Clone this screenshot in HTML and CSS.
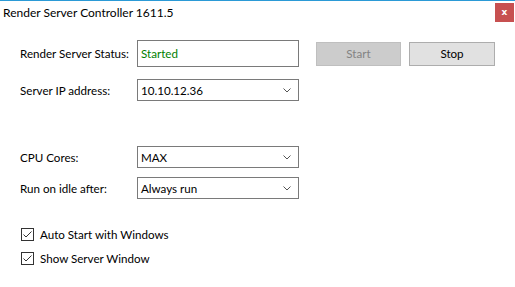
FILE: index.html
```html
<!DOCTYPE html>
<html lang="en">
<head>
    <meta charset="UTF-8">
    <title>Render Server Controller</title>
    <link rel="stylesheet" href="styles.css">
</head>
<body>
    <div class="window">
        <div class="titlebar">
            <span class="title">Render Server Controller 1611.5</span>
            <div class="close-btn">x</div>
        </div>

        <div class="content">
            <div class="row row-status">
                <label class="field-label">Render Server Status:</label>
                <div class="status-box">Started</div>
                <button class="btn btn-disabled" disabled>Start</button>
                <button class="btn">Stop</button>
            </div>

            <div class="row row-ip">
                <label class="field-label">Server IP address:</label>
                <div class="combo">
                    <span>10.10.12.36</span>
                    <svg class="chevron" width="8" height="5" viewBox="0 0 8 5"><polyline points="0.5,0.5 4,4 7.5,0.5" fill="none" stroke="#555" stroke-width="1"/></svg>
                </div>
            </div>

            <div class="row row-cpu">
                <label class="field-label">CPU Cores:</label>
                <div class="combo">
                    <span>MAX</span>
                    <svg class="chevron" width="8" height="5" viewBox="0 0 8 5"><polyline points="0.5,0.5 4,4 7.5,0.5" fill="none" stroke="#555" stroke-width="1"/></svg>
                </div>
            </div>

            <div class="row row-idle">
                <label class="field-label">Run on idle after:</label>
                <div class="combo">
                    <span>Always run</span>
                    <svg class="chevron" width="8" height="5" viewBox="0 0 8 5"><polyline points="0.5,0.5 4,4 7.5,0.5" fill="none" stroke="#555" stroke-width="1"/></svg>
                </div>
            </div>

            <!-- Options -->
            <div class="check-row check-first">
                <span class="check-box"><svg width="11" height="11" viewBox="0 0 11 11"><polyline points="1.5,5.5 4,8 9.5,2.5" fill="none" stroke="#333" stroke-width="1"/></svg></span>
                <span>Auto Start with Windows</span>
            </div>
            <div class="check-row">
                <span class="check-box"><svg width="11" height="11" viewBox="0 0 11 11"><polyline points="1.5,5.5 4,8 9.5,2.5" fill="none" stroke="#333" stroke-width="1"/></svg></span>
                <span>Show Server Window</span>
            </div>
        </div>
    </div>
</body>
</html>
```
FILE: styles.css
```css
body {
    margin: 0;
    background: #ffffff;
    font-family: "Lato", "Noto Sans", sans-serif;
    font-size: 11.6px;
    color: #000;
}

.window {
    width: 515px;
    height: 287px;
    box-sizing: border-box;
}

.titlebar {
    height: 27px;
    box-sizing: border-box;
    border-top: 1px solid #2b9ad6;
    display: flex;
    align-items: flex-start;
    justify-content: space-between;
}

.title {
    margin-top: 4px;
    margin-left: 3px;
    font-size: 12px;
}

.close-btn {
    width: 19px;
    height: 19px;
    margin-top: 2px;
    margin-right: 1px;
    background: #c75050;
    color: #fff;
    font-family: "DejaVu Sans", sans-serif;
    font-weight: bold;
    font-size: 9px;
    line-height: 18px;
    text-align: center;
}

.content {
    padding: 13px 0 0 20px;
}

.row {
    display: flex;
    align-items: center;
}

.field-label {
    width: 117px;
}

.row-status {
    height: 27px;
}

.status-box {
    width: 162px;
    height: 27px;
    box-sizing: border-box;
    border: 1px solid #7a7a7a;
    padding-left: 3px;
    display: flex;
    align-items: center;
    color: #008000;
}

/* Buttons */
.btn {
    width: 86px;
    height: 24px;
    margin-left: 8px;
    border: 1px solid #adadad;
    background: #e1e1e1;
    font-family: inherit;
    font-size: 11.6px;
    color: #000;
    padding: 0;
}

.btn-disabled {
    margin-left: 17px;
    width: 85px;
    background: #cccccc;
    border-color: #bfbfbf;
    color: #838383;
}

/* Combos */
.combo {
    width: 162px;
    height: 22px;
    box-sizing: border-box;
    border: 1px solid #7a7a7a;
    padding: 0 7px 0 3px;
    display: flex;
    align-items: center;
    justify-content: space-between;
}

.row-ip {
    margin-top: 12px;
}

.row-cpu {
    margin-top: 45px;
}

.row-idle {
    margin-top: 9px;
}

/* Checkboxes */
.check-row {
    display: flex;
    align-items: center;
    height: 16px;
    margin-top: 8px;
    padding-left: 1px;
}

.check-first {
    margin-top: 27px;
}

.check-box {
    width: 13px;
    height: 13px;
    box-sizing: border-box;
    border: 1px solid #333;
    margin-right: 6px;
    display: flex;
    align-items: center;
    justify-content: center;
}

.check-box svg {
    display: block;
}
```
